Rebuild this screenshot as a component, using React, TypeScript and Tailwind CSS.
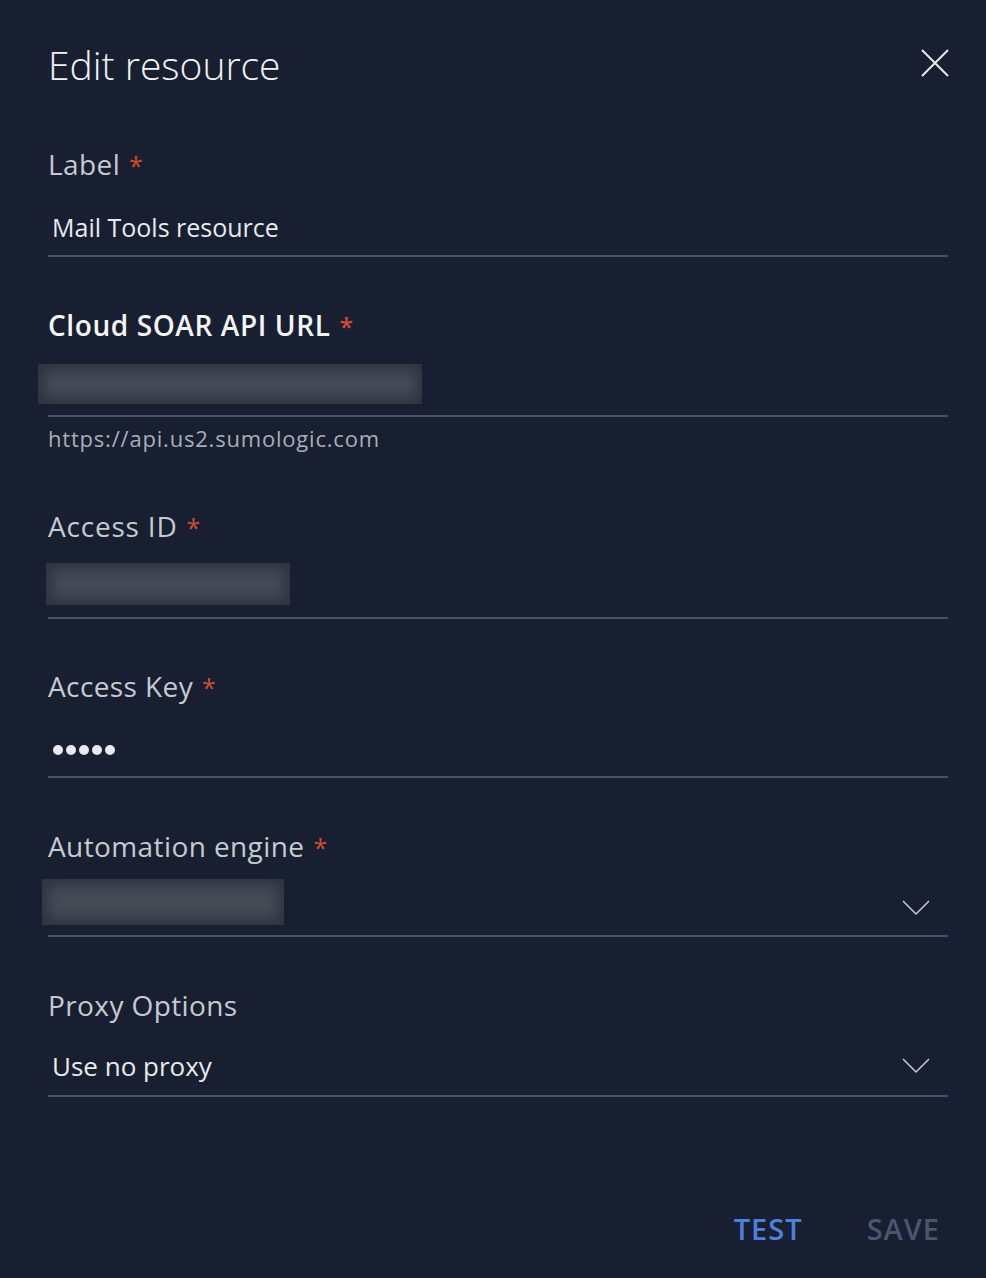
import React from "react";

const Star = () => <span className="ml-[9px] text-[#d24a35] text-[25px]">*</span>;

const Chevron = () => (
  <svg width="28" height="16" viewBox="0 0 28 16" fill="none" stroke="#c7ccd6" strokeWidth="1.5">
    <path d="M1 1 L14 14 L27 1" />
  </svg>
);

const Label = ({ children, star = true, strong = false, className = "" }: { children: React.ReactNode; star?: boolean; strong?: boolean; className?: string }) => (
  <div
    className={`text-[28px] leading-none ${strong ? "font-semibold text-[#f4f5f7] tracking-[0.6px]" : "font-medium text-[#c6cad1] tracking-[0.4px]"} ${className}`}
  >
    {children}
    {star && <Star />}
  </div>
);

export default function App() {
  return (
    <div className="w-[986px] h-[1278px] bg-[#181f30] text-white flex flex-col pl-[48px] pr-[38px]" style={{ fontFamily: "'Open Sans', sans-serif" }}>
      <div className="flex items-center justify-between pt-[41px] h-[87px]">
        <h1 className="text-[39px] font-light text-[#f1f2f4] leading-none">Edit resource</h1>
        <svg width="28" height="28" viewBox="0 0 28 28" stroke="#e6e8ec" strokeWidth="2" className="mr-[-1px] mt-[-3px]">
          <path d="M1 1 L27 27 M27 1 L1 27" />
        </svg>
      </div>

      {/* Label */}
      <Label className="mt-[63px]">Label</Label>
      <div className="mt-[37px] pl-[4px] text-[25px] text-[#e8eaee] leading-none">Mail Tools resource</div>
      <div className="mt-[15px] h-[2px] bg-[#45526e]" />

      {/* Cloud SOAR */}
      <Label strong className="mt-[54px]">Cloud SOAR API URL</Label>
      <div className="mt-[25px] ml-[-10px] w-[384px] h-[40px] bg-[#464b56] shadow-[inset_0_0_14px_6px_#2e3340]" />
      <div className="mt-[11px] h-[2px] bg-[#45526e]" />
      <div className="mt-[10px] text-[22px] text-[#a9aeb8] leading-none tracking-[0.8px]">https://api.us2.sumologic.com</div>

      {/* Access ID */}
      <Label className="mt-[63px] tracking-[0.8px]">Access ID</Label>
      <div className="mt-[23px] ml-[-2px] w-[244px] h-[42px] bg-[#464b56] shadow-[inset_0_0_14px_6px_#2e3340]" />
      <div className="mt-[12px] h-[2px] bg-[#45526e]" />

      {/* Access Key */}
      <Label className="mt-[53px]">Access Key</Label>
      <div className="mt-[45px] pl-[5px] flex gap-[3px]">
        {[0, 1, 2, 3, 4].map((i) => (
          <span key={i} className="w-[10px] h-[10px] rounded-full bg-[#e8eaee]" />
        ))}
      </div>
      <div className="mt-[21px] h-[2px] bg-[#45526e]" />

      {/* Automation engine */}
      <Label className="mt-[54px] tracking-[0.2px]">Automation engine</Label>
      <div className="mt-[19px] flex items-end justify-between">
        <div className="ml-[-6px] w-[242px] h-[46px] bg-[#464b56] shadow-[inset_0_0_14px_6px_#2e3340]" />
        <div className="mr-[18px] mb-[9px]"><Chevron /></div>
      </div>
      <div className="mt-[10px] h-[2px] bg-[#45526e]" />

      {/* Proxy */}
      <Label star={false} className="mt-[54px]">Proxy Options</Label>
      <div className="mt-[34px] flex items-center justify-between">
        <span className="pl-[4px] text-[26px] text-[#e8eaee] leading-none">Use no proxy</span>
        <div className="mr-[18px]"><Chevron /></div>
      </div>
      <div className="mt-[16px] h-[2px] bg-[#45526e]" />

      <div className="mt-[117px] flex justify-end gap-[64px] pr-[8px] text-[29px] font-semibold leading-none tracking-[1px]">
        <span className="text-[#4e80dc]">TEST</span>
        <span className="text-[#4a5670]">SAVE</span>
      </div>
    </div>
  );
}
